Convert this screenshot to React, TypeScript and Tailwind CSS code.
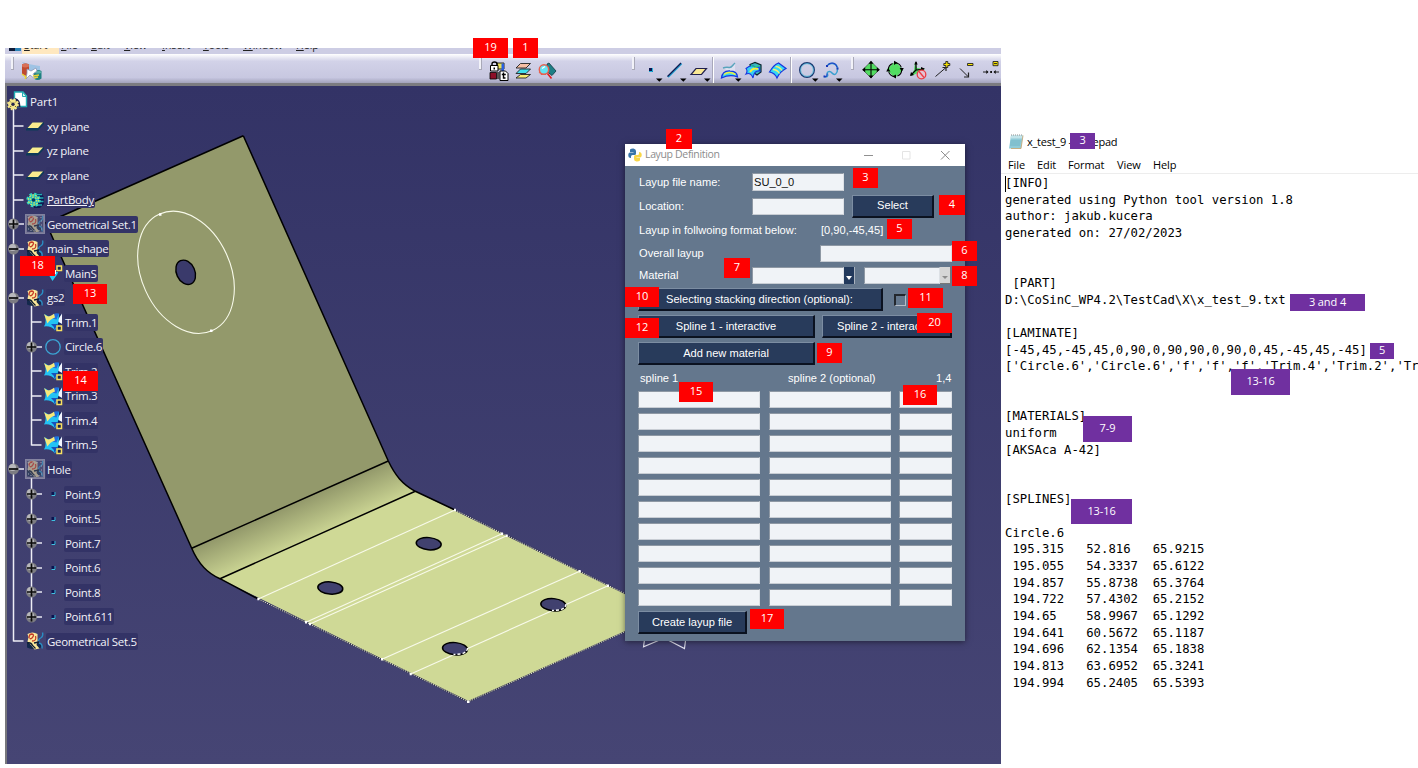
import type { ReactNode } from "react";

/* ---------- toolbar icons, each on a 24px grid ---------- */

function Icon({ children }: { children: ReactNode }) {
  return (
    <svg viewBox="0 0 24 24" className="h-6 w-6 shrink-0 overflow-visible" fill="none">
      {children}
    </svg>
  );
}

const drop = <path d="M17 18.500h6.500l-3.200 3.300z" fill="#000" />;

const catalogIcon = (
  <Icon>
    <path d="M3 2c5 1 8 3 18 4v5H10z" fill="#9fc3e4" />
    <path d="M3 4.500q3.500-2 7 0v11q-4 1-7-1z" fill="#c04a30" />
    <path d="M3 4.500q3.500-2 7 0v2q-4 2-7 0z" fill="#d97058" />
    <path d="M15 11q4-2 7.500 0v7.500q-4 3-7.500 0z" fill="#1f8080" />
    <path d="M16 11.500q3-1.500 6 0v1.500q-3 1-6 0z" fill="#5ab0a8" />
    <path d="M8 9l4 2 5-3 1 3-4 3 2 5-5-4-4 4 1-6z" fill="#fff" stroke="#8b95b8" strokeWidth=".8" />
    <path d="M3 14l4 3-1 2M14 16l6-1M15 18l4-1" stroke="#e8d33a" strokeWidth="1.500" />
  </Icon>
);

const lockIcon = (
  <Icon>
    <path d="M10 3h7v6h-7z" fill="#e8e05c" stroke="#000" strokeWidth=".8" />
    <path d="M14.500 3.500h2.500v9h-2.500z" fill="#2a60e0" />
    <path d="M5 6V4q0-2 2.500-2T10 4v2" stroke="#000" strokeWidth="1.400" />
    <path d="M3.500 5.500h7.500v5.500h-7.500z" fill="#fff" stroke="#000" />
    <path d="M6.500 7.500h1.500v2H6.500z" fill="#000" />
    <path d="M3 12.500h6.500v6.500H3z" fill="#8c0f28" stroke="#000" strokeWidth=".8" />
    <path d="M10 12h2.500v7H10z" fill="#555" />
    <path d="M13 11h5.500l2.500 2.500v7h-8z" fill="#fff" stroke="#000" />
    <path d="M16.500 12.500v5.500h2M14.800 14.500h4" stroke="#000" strokeWidth="1.400" />
  </Icon>
);

const layersIcon = (
  <Icon>
    <path d="M9.500 3.500H19.500l-4.500 4.500H5z" fill="#f6bea4" stroke="#222" strokeWidth=".9" />
    <path d="M9.500 9H19.500l-4.500 4.500H5z" fill="#3fe0ee" stroke="#222" strokeWidth=".9" />
    <path d="M9.500 14.500H19.500l-4.500 3.500H5z" fill="#f8ed72" stroke="#222" strokeWidth=".9" />
  </Icon>
);

const searchIcon = (
  <Icon>
    <path d="M12 4l2-1 7 8-4 4.500-5-4z" fill="#1d7f86" stroke="#0c3840" strokeWidth=".8" />
    <circle cx="9" cy="9.500" r="4.700" fill="#62e4f4" stroke="#e8604e" strokeWidth="1.500" />
    <path d="M7 8.500l3-2" stroke="#fff" strokeWidth="1.300" />
    <path d="M12.500 13.500l4 5" stroke="#e02020" strokeWidth="1.700" />
    <path d="M4 12l2 2.500h5" stroke="#e8604e" />
  </Icon>
);

const pointIcon = (
  <Icon>
    <path d="M10 8h4v4h-4z" fill="#0a1550" />
    <path d="M13.500 8v3.500h-3.500" stroke="#22b4dc" />
    {drop}
  </Icon>
);

const lineIcon = (
  <Icon>
    <path d="M5 17L18.500 3.500" stroke="#22a0d0" strokeWidth="2" />
    <path d="M4.500 16.500L18 3" stroke="#101850" strokeWidth="1.200" />
    {drop}
  </Icon>
);

const planeIcon = (
  <Icon>
    <path d="M9 8.500h10.500l-5 6H4z" fill="#fae994" stroke="#20204c" strokeWidth="1.200" />
    {drop}
  </Icon>
);

const sweepIcon = (
  <Icon>
    <path d="M6 8q3-1 5 0c3 1 3-2 6-4.500V11l-6 2z" fill="#e8ecf8" opacity=".6" />
    <path d="M5 8q3-1 6-.500c3 .500 3-2 6-4.500" stroke="#58a4bc" strokeWidth="1.500" />
    <path d="M3.500 18q1-7.500 8.500-7 7 0 7.500 6-7.500-3-16 1z" fill="#35d8f0" stroke="#1836e0" strokeWidth="1.300" />
    <path d="M6 14.500q5-4 11.500 0" stroke="#f4ee40" strokeWidth="1.500" />
    {drop}
  </Icon>
);

const filletIcon = (
  <Icon>
    <path d="M8 4.500l5-2 6 2.500v7l-4 3-6-4z" fill="#3bb7c0" stroke="#0b2630" strokeWidth="1.200" />
    <path d="M4 8.500q4-3.500 7-2.500 3 1.500 6 1l1 4q-6-1-7 7-2-6-7-4 2-3 0-5.500z" fill="#35d0f4" stroke="#1836e0" strokeWidth="1.100" />
    <path d="M8 12q3-5 8-3" stroke="#f4ee40" strokeWidth="2" />
    <path d="M9 5l3 2 5-1" stroke="#20e070" />
  </Icon>
);

const offsetIcon = (
  <Icon>
    <path d="M3.500 12q4-7 9-9l7.500 5.500q-6 3-9 9.500-2-5-7.500-6z" fill="#35d8f4" stroke="#1836e0" strokeWidth="1.200" />
    <path d="M7 9.500q4 0 6.500 4M9.500 6.500q4 0 6.500 4" stroke="#f4f070" strokeWidth="1.400" />
  </Icon>
);

const circleIcon = (
  <Icon>
    <circle cx="12" cy="10" r="7.300" stroke="#1d3a72" strokeWidth="1.400" />
    <circle cx="12" cy="10" r="6.400" stroke="#3fb2d4" strokeWidth=".8" />
    {drop}
  </Icon>
);

const splineIcon = (
  <Icon>
    <path d="M8.500 5.500c2-3.500 9-2.500 10 2.500M18.500 9c0 5-3 7-5.500 4-2-2.500-5.500-1.500-4.500 1 .800 2-.500 3.500-3 2.500" stroke="#38a0d0" strokeWidth="1.500" />
    <path d="M9 5c2-3 8-2.500 9 2M8 13.500c0 2 0 3.500-2.500 3" stroke="#1e4ac8" strokeWidth="1.200" />
    <path d="M7 5h2v2H7zM4.500 15.500h2v2h-2zM17.500 7.500h2v2h-2z" fill="#1838b8" />
    {drop}
  </Icon>
);

const moveIcon = (
  <Icon>
    <path d="M12 1.500l8.300 8.200-8.300 8.300-8.300-8.300z" fill="#52dc62" stroke="#222" strokeWidth=".5" />
    <path d="M12 2v15.500M4 9.700h16" stroke="#000" strokeWidth="1.100" />
    <path d="M12 .8l2.500 3H9.500zM12 18.600l2.500-3H9.500zM3.200 9.700l3-2.500v5zM20.800 9.700l-3-2.500v5z" fill="#000" />
  </Icon>
);

const rotateIcon = (
  <Icon>
    <path d="M12 1.500l8.300 8.200-8.300 8.300-8.300-8.300z" fill="#52dc62" />
    <circle cx="12" cy="9.700" r="6.700" stroke="#000" strokeWidth="1.100" strokeDasharray="8 2.500" />
    <path d="M11 .8l3.500 2-3.500 2.200zM13 18.600l-3.500-2 3.500-2.200zM3.200 11.500l2-3.500 2.200 3.500zM20.800 8l-2 3.500-2.200-3.500z" fill="#000" />
  </Icon>
);

const hideIcon = (
  <Icon>
    <path d="M8 2l2 6 8 1-7 4-7 3 3-6z" fill="#52dc62" />
    <path d="M9 2v8l8-1M9 10l-5 5" stroke="#000" strokeWidth="1.200" />
    <path d="M9 1l1.700 3.500H7.300zM3 16l1-4 3 3zM18 8.700l-4-1.700v3.500z" fill="#000" />
    <circle cx="14.500" cy="14.500" r="4.300" stroke="#ec3c44" strokeWidth="1.300" fill="#e5c3d2" />
    <path d="M12 11.500l5 6" stroke="#ec3c44" strokeWidth="1.300" />
  </Icon>
);

const addIcon = (
  <Icon>
    <path d="M4.500 16.500L15 7.500" stroke="#222" />
    <path d="M15 7v4M15.500 7.500h-4" stroke="#222" strokeWidth="1.200" />
    <path d="M14.800 1.500h2v2h2v2h-2v2h-2v-2h-2v-2h2z" fill="#fbe600" stroke="#222" strokeWidth=".9" />
  </Icon>
);

const removeIcon = (
  <Icon>
    <path d="M5 8.500l8 8" stroke="#222" />
    <path d="M13.500 12.500v4.500h-4.500" stroke="#222" strokeWidth="1.200" />
    <path d="M12.500 3.500h5.500v2h-5.500z" fill="#fbe600" stroke="#222" strokeWidth=".9" />
  </Icon>
);

const fitIcon = (
  <Icon>
    <path d="M4 12h5M20 12h-5" stroke="#222" />
    <path d="M9.500 12L7.300 9.900v4.200zM14.500 12L16.700 9.900v4.200zM11.200 11h1.800v2h-1.800z" fill="#111" />
    <path d="M14 1.500h5v4.200h-5z" fill="#fbe600" stroke="#222" strokeWidth=".9" />
    <path d="M15 3.600h3" stroke="#222" />
  </Icon>
);

function Grip() {
  return <div className="h-[13px] w-[3px] shrink-0 border-r border-b border-[#a9a9b8] bg-[#f2f2f8]" />;
}

function Divider() {
  return <div className="h-[26px] w-0.5 shrink-0 border-r border-white bg-[#a8a8ba]" />;
}

function Toolbar() {
  return (
    <div className="relative flex h-[29px] shrink-0 items-start bg-linear-to-b from-white via-[#d2d2e8] via-25% to-[#c4c4de] pt-[3px]">
      <div className="absolute inset-x-0 bottom-0 h-[5px] bg-linear-to-b from-[#c4c4de] to-[#a2a2ba]" />
      <div className="relative flex">
        <div className="ml-1.5"><Grip /></div>
        <div className="mt-[3px] ml-[5px]">{catalogIcon}</div>
        <div className="ml-[436px]"><Grip /></div>
        <div className="mt-[3px] ml-[5px] flex">{lockIcon}{layersIcon}{searchIcon}</div>
        <div className="ml-[73px]"><Grip /></div>
        <div className="mt-[3px] ml-1 flex">{pointIcon}{lineIcon}{planeIcon}</div>
        <div className="ml-px"><Divider /></div>
        <div className="mt-[3px] ml-[4px] flex">{sweepIcon}{filletIcon}{offsetIcon}</div>
        <div><Divider /></div>
        <div className="mt-[3px] ml-[3px] flex">{circleIcon}{splineIcon}</div>
        <div className="ml-2"><Grip /></div>
        <div className="mt-[3px] ml-[5px] flex">
          {moveIcon}{rotateIcon}{hideIcon}{addIcon}{removeIcon}{fitIcon}
        </div>
      </div>
    </div>
  );
}

const menus = [
  { name: "Start", box: "w-[37px] bg-[#ffe8bf] pl-0.5" },
  { name: "File", box: "w-[30px] pl-0.5" },
  { name: "Edit", box: "w-[33px] pl-0.5" },
  { name: "View", box: "w-[38px] pl-0.5" },
  { name: "Insert", box: "w-[41px] pl-0.5" },
  { name: "Tools", box: "w-[40px] pl-0.5" },
  { name: "Window", box: "w-[53px] pl-0.5" },
  { name: "Help", box: "w-[40px] pl-0.5" },
];

function MenuStrip() {
  return (
    <div className="flex h-[6px] shrink-0 items-end overflow-hidden bg-[#cdcde4] pl-1">
      <div className="flex h-[6px] w-[13px] items-start">
        <div className="h-[3px] w-1.5 bg-[#101c38]" />
        <div className="h-[3px] w-1.5 bg-[#2c84b8]" />
      </div>
      {menus.map((m) => (
        <div key={m.name} className={`flex h-5 items-end font-['Open_Sans',sans-serif] text-[10.500px] leading-[18px] text-[#222] ${m.box}`}>
          <span>
            <span className="underline">{m.name[0]}</span>
            {m.name.slice(1)}
          </span>
        </div>
      ))}
    </div>
  );
}

/* ---------- part drawing ---------- */

const holes = [
  [428.700, 543.700],
  [330.300, 588],
  [553.300, 604.700],
  [455, 648.700],
];

const traces = [
  [258.300, 599, 455, 510],
  [306, 622.300, 502, 533.700],
  [310, 624, 506.700, 535.700],
  [382, 659.300, 579.700, 571.300],
  [410.700, 674, 608, 585.700],
];

function Model() {
  return (
    <svg viewBox="7 86 994 678" className="absolute inset-0 h-full w-full" fill="none">
      <defs>
        <linearGradient id="bend" gradientUnits="userSpaceOnUse" x1="289" y1="506" x2="306" y2="544">
          <stop offset="0" stopColor="#93996b" />
          <stop offset="1" stopColor="#cfd996" />
        </linearGradient>
      </defs>
      <path d="M243.300 135.700L388.300 461 191.700 548.300 46 223z" fill="#93996b" />
      <path d="M388.300 461C395 475 402 484 415.300 491.300L220 578.700C206 573 198 563 191.700 548.300z" fill="url(#bend)" />
      <path d="M415.300 491.300L640 601v24L468.300 701.700 220 578.700z" fill="#cfd996" />
      <g stroke="#000" strokeWidth="1.500">
        <path d="M243.300 135.700L388.300 461C395 475 402 484 415.300 491.300L455 510" />
        <path d="M243.300 135.700L46 223 191.700 548.300C198 563 206 573 220 578.700L258.300 599" />
        <path d="M191.700 548.300L388.300 461M220 578.700L415.300 491.300" />
      </g>
      <path d="M258.300 599L468.300 701.700 640 625M455 510L640 601" stroke="#33334a" strokeWidth="1.300" />
      <path d="M258.300 599L468.300 701.700 640 625M455 510L640 601" stroke="#f4f6e4" strokeWidth=".9" strokeDasharray="1.200 1.200" />
      <g stroke="#f8faea" strokeWidth="1.100">
        {traces.map(([x1, y1, x2, y2]) => (
          <g key={x1}>
            <path d={`M${x1} ${y1}L${x2} ${y2}`} />
            <path d={`M${x1 - 1} ${y1}h2M${x2 - 1} ${y2}h2`} stroke="#fff" strokeWidth="2.500" />
          </g>
        ))}
        <ellipse cx="186" cy="272.300" rx="63.900" ry="44.400" transform="rotate(65.600 186 272.300)" />
      </g>
      <ellipse cx="185.700" cy="272.300" rx="12.700" ry="9.200" transform="rotate(65.600 185.700 272.300)" fill="#3a3a6b" stroke="#000" strokeWidth="1.400" />
      {holes.map(([x, y]) => (
        <ellipse key={x} cx={x} cy={y} rx="12.500" ry="6.100" transform={`rotate(5 ${x} ${y})`} fill="#41416f" stroke="#000" strokeWidth="1.500" />
      ))}
      <path d="M566 604q0 4-6 6l-8 .5M467.500 648q0 4-6 6l-8 .5" stroke="#fff" strokeWidth="1.400" strokeDasharray="3 2" />
      <path d="M159 214.500h2.500M210 330.700h2.500M467 701.700h2.500" stroke="#fff" strokeWidth="2.500" />
      <path d="M645 636l-1.500 10.800L662 639M666 639l18.500 9.600 1.500-12" stroke="#e4e4f0" strokeWidth="1.100" />
    </svg>
  );
}

/* ---------- specification tree ---------- */

function PartGlyph() {
  return (
    <svg viewBox="0 0 22 22" className="h-[22px] w-[22px]" fill="none">
      <path d="M7.500 1h8.500l3.500 4v10.500h-12z" fill="#fff" stroke="#23aeb4" strokeWidth="1.400" />
      <path d="M15.500 1v4.500h4z" fill="#d8f4f4" stroke="#23aeb4" />
      <path d="M8 7q5.500 1 5.500 9H8z" fill="#1b1b48" />
      <circle cx="6" cy="13.300" r="4.800" fill="#f4e58a" stroke="#f4e58a" strokeWidth="2.200" strokeDasharray="1.900 1.870" />
      <circle cx="6" cy="13.300" r="4.200" fill="#f4e58a" />
      <circle cx="6" cy="13.300" r="1.700" fill="#26264c" />
      <path d="M3.200 10.500l1 1M9 10.500l-1 1M3.200 16l1-1M9 16l-1-1" stroke="#6a6030" />
    </svg>
  );
}

function PlaneGlyph() {
  return (
    <svg viewBox="0 0 18 18" className="h-[18px] w-[18px]">
      <path d="M6.500 5.500h11.500v1.500l-6 6.500H0v-1.500z" fill="#0d3a58" />
      <path d="M6.500 5.500h10.500l-5 5.500H1.500z" fill="#faec8e" />
    </svg>
  );
}

function BodyGlyph() {
  return (
    <svg viewBox="0 0 18 18" className="h-[18px] w-[18px]" fill="none">
      <path d="M9 2h6l3 4v7l-4 4H8z" fill="#0c1c54" />
      <path d="M11 3.500h5M13 7h4.500M13 10.500h4.500M11 14h5" stroke="#27a8b0" strokeWidth="1.700" />
      <circle cx="7.500" cy="9" r="5.800" fill="#22b8c4" stroke="#34d8c0" strokeWidth="2.800" strokeDasharray="2.400 2.150" />
      <circle cx="7.500" cy="9" r="5" stroke="#cfe85a" strokeWidth="1.300" strokeDasharray="1.600 1.500" />
      <circle cx="7.500" cy="9" r="3" stroke="#cfe85a" strokeWidth="1.300" strokeDasharray="1.600 1.500" />
      <circle cx="7.500" cy="9" r="1.800" fill="#0c3a60" />
    </svg>
  );
}

function SetGlyph({ hidden }: { hidden?: boolean }) {
  return (
    <svg viewBox="0 0 20 20" className="h-5 w-5" fill="none">
      <path d="M2 12.500q5-2.500 14 0v4q-7 3-14 0z" fill="#13284c" />
      <path d="M2.500 3q5-3 10 0v7l-1 4 3 3.500-5 1-3-4-4-4 1-4z" fill={hidden ? "#c9bc96" : "#fbe89a"} />
      <path d="M4 7q0-4 3-4 3 .5 0 4-2 1.500-2 0M7 10q5 0 3.500-5" stroke="#c43c28" strokeWidth="1.300" />
      <path d="M17.500 1.500q1 3-1 5-3 1-3 4M14 12q4 1 3 5.500" stroke="#2a8ec4" strokeWidth="1.300" />
      <path d="M2 12q4-1 5.500 2.500l3 3M9 12l5-1" stroke="#0d1c30" strokeWidth="1.300" />
      {hidden && (
        <>
          <path d="M.5.5h19v19H.5z" fill="#6c6c88" opacity=".35" />
          <path d="M.5.5h19v19H.5z" stroke="#c4c4d0" strokeDasharray="1 1" />
          <path d="M1.500 1.500h17v17h-17z" stroke="#a4a4b8" strokeDasharray="1 1" />
          <path d="M3.500 3.500h13v13h-13z" stroke="#a4a4b8" strokeDasharray="1 3" />
        </>
      )}
    </svg>
  );
}

function TrimGlyph() {
  return (
    <svg viewBox="0 0 20 20" className="h-5 w-5" fill="none">
      <path d="M12 4l7-2v10l-5 1z" fill="#0d2460" />
      <path d="M19 1.500V12l-5-3z" fill="#f4f6ff" />
      <path d="M1.500 2l4 2.500L16 2l-.500 8-3.500 8.500Q8 13.500 1 14.500 4 10 1.500 2z" fill="#23c3f4" />
      <path d="M10 2.500q3-2 6-1l-2.500 6-4-1z" fill="#2070e0" />
      <path d="M1 2q3 2.500 5 2.500 3-1 5-2.800L12 5.500Q7 7 4.500 11.500z" fill="#f8e878" />
      <path d="M8 12q3 2 3.500 6l3-6z" fill="#1a50b8" />
      <path d="M14 14h4.500v4.500H14z" fill="#18204c" stroke="#f8e060" strokeWidth="1.500" />
    </svg>
  );
}

function MainGlyph() {
  return (
    <svg viewBox="0 0 20 20" className="h-5 w-5" fill="none">
      <path d="M4 9h11l-.500 2-5 7z" fill="#25c8f4" />
      <path d="M7 7h6v4H7z" fill="#fff" />
      <path d="M14 3h4.500v4.500H14z" fill="#18204c" stroke="#f8e060" strokeWidth="1.500" />
    </svg>
  );
}

function RingGlyph() {
  return (
    <svg viewBox="0 0 20 20" className="h-5 w-5" fill="none">
      <circle cx="10" cy="9.900" r="7.200" stroke="#3ba4d4" strokeWidth="1.300" />
    </svg>
  );
}

function DotGlyph() {
  return (
    <svg viewBox="0 0 20 20" className="h-5 w-5" fill="none">
      <path d="M8.500 8h4v4h-4z" fill="#0c1450" />
      <path d="M12 8v3.500H8.500" stroke="#40c0e0" />
    </svg>
  );
}

function Knob({ plus }: { plus: boolean }) {
  return (
    <svg viewBox="0 0 17 12" className="h-3 w-[17px] shrink-0" fill="none">
      <path d="M6.500 6h10.500" stroke="#e8e8f2" strokeWidth="1.500" />
      <circle cx="6.500" cy="6" r="5.500" fill="#7c7c82" />
      <circle cx="5.500" cy="4.500" r="3.500" fill="#b8b8bc" />
      <path d={plus ? "M2 6h9M6.500 1.500v9" : "M2 6h9"} stroke="#0a0a0a" strokeWidth="1.700" />
    </svg>
  );
}

function Tick() {
  return (
    <svg viewBox="0 0 17 12" className="h-3 w-[17px] shrink-0">
      <path d="M6.500 6h10" stroke="#eeeef6" strokeWidth="1.500" />
    </svg>
  );
}

type Row = { text: string; icon: ReactNode; sub?: boolean; knob?: "plus" | "minus"; underline?: boolean };

const treeRows: Row[] = [
  { text: "xy plane", icon: <PlaneGlyph /> },
  { text: "yz plane", icon: <PlaneGlyph /> },
  { text: "zx plane", icon: <PlaneGlyph /> },
  { text: "PartBody", icon: <BodyGlyph />, underline: true },
  { text: "Geometrical Set.1", icon: <SetGlyph hidden />, knob: "plus" },
  { text: "main_shape", icon: <SetGlyph />, knob: "minus" },
  { text: "MainS", icon: <MainGlyph />, sub: true },
  { text: "gs2", icon: <SetGlyph />, knob: "minus" },
  { text: "Trim.1", icon: <TrimGlyph />, sub: true },
  { text: "Circle.6", icon: <RingGlyph />, sub: true, knob: "plus" },
  { text: "Trim.2", icon: <TrimGlyph />, sub: true },
  { text: "Trim.3", icon: <TrimGlyph />, sub: true },
  { text: "Trim.4", icon: <TrimGlyph />, sub: true },
  { text: "Trim.5", icon: <TrimGlyph />, sub: true },
  { text: "Hole", icon: <SetGlyph hidden />, knob: "minus" },
  { text: "Point.9", icon: <DotGlyph />, sub: true, knob: "plus" },
  { text: "Point.5", icon: <DotGlyph />, sub: true, knob: "plus" },
  { text: "Point.7", icon: <DotGlyph />, sub: true, knob: "plus" },
  { text: "Point.6", icon: <DotGlyph />, sub: true, knob: "plus" },
  { text: "Point.8", icon: <DotGlyph />, sub: true, knob: "plus" },
  { text: "Point.611", icon: <DotGlyph />, sub: true, knob: "plus" },
  { text: "Geometrical Set.5", icon: <SetGlyph /> },
];

function Tree() {
  return (
    <div className="relative flex flex-col pt-[3.500px] font-['Open_Sans',sans-serif] text-[11.500px] tracking-[-0.300px] text-[#f2f2f8]">
      <svg viewBox="7 86 60 580" className="absolute top-0 left-0 h-[580px] w-[60px]" fill="none">
        <path d="M13.500 108v533.500M31.500 304v141.500M31.500 478v139" stroke="#eeeef6" strokeWidth="1.500" />
      </svg>
      <div className="relative flex h-[24.520px] items-center">
        <PartGlyph />
        <span className="ml-px tracking-[-0.100px]">Part1</span>
      </div>
      {treeRows.map((r) => (
        <div key={r.text} className={`relative flex h-[24.520px] items-center ${r.sub ? "pl-[18px]" : ""}`}>
          {r.knob ? <Knob plus={r.knob === "plus"} /> : <Tick />}
          <span className="flex w-[21px] shrink-0 justify-center">{r.icon}</span>
          <span className={`ml-px h-[17px] rounded-xs bg-[#333366] px-px leading-[17px] whitespace-pre ${r.underline ? "underline" : ""}`}>{r.text}</span>
        </div>
      ))}
    </div>
  );
}

/* ---------- dialog ---------- */

function Field({ className }: { className: string }) {
  return <div className={`h-[17px] shrink-0 border border-t-[#8e98a4] border-r-[#dde1e6] border-b-[#c8cdd4] border-l-[#8e98a4] bg-[#f0f3f7] ${className}`} />;
}

function Button({ className, children }: { className: string; children: ReactNode }) {
  return (
    <div className={`flex h-[23px] shrink-0 items-center border border-r-2 border-b-2 border-t-[#7c8da2] border-r-[#0b1220] border-b-[#0b1220] border-l-[#7c8da2] bg-[#283b5b] whitespace-nowrap ${className}`}>
      {children}
    </div>
  );
}

function Dialog() {
  return (
    <div className="absolute top-[58px] left-[618px] w-[340px] bg-[#64778d] font-['Liberation_Sans',Arial,sans-serif] text-[11.100px] text-white shadow-[0_1px_6px_rgba(0,0,0,0.5)]">
      <div className="flex h-[22px] items-center bg-white pl-[3px] font-['Open_Sans',sans-serif] text-[10.500px] tracking-[-0.350px] text-[#8c8c8c]">
        <svg viewBox="0 0 14 14" className="mr-[3px] h-[14px] w-[14px]">
          <path d="M2 1.500Q3.500.3 5.500.5 8 1 8 3v2.500Q8 7 6.500 7H4.500Q3 7 3 8.500V10Q0 10 .3 6.500.500 4.500 2 4.500h3.500V4H2z" fill="#3874a8" />
          <path d="M12 12.500q-1.500 1.200-3.500 1Q6 13 6 11V8.500Q6 7 7.500 7h2Q11 7 11 5.500V4q3 0 2.700 3.500-.2 2-1.700 2H8.500v.5H12z" fill="#f8d648" />
        </svg>
        <span className="grow">Layup Definition</span>
        <svg viewBox="0 0 90 12" className="mr-[12px] h-3 w-[90px] shrink-0" fill="none">
          <path d="M1 6.500h9" stroke="#909090" />
          <path d="M39.500 2.500h7.500v7.500h-7.500z" stroke="#e4e4e4" />
          <path d="M78 2l8.500 8.500M86.500 2L78 10.500" stroke="#8a8a8a" />
        </svg>
      </div>
      <div className="flex flex-col px-[13px] pt-1 pb-1">
        <div className="flex h-6 items-center">
          <span className="w-[114px] pl-px">Layup file name:</span>
          <div className="flex h-[18px] w-[92px] items-center border border-t-[#8e98a4] border-r-[#dde1e6] border-b-[#c8cdd4] border-l-[#8e98a4] bg-[#f0f3f7] pl-px text-[#111]">SU_0_0</div>
        </div>
        <div className="flex h-6 items-center">
          <span className="w-[114px] pl-px">Location:</span>
          <Field className="w-[92px]" />
          <Button className="ml-2 w-[82px] justify-center">Select</Button>
        </div>
        <div className="flex h-6 items-center">
          <span className="w-[183px] pl-px">Layup in follwoing format below:</span>
          <span>[0,90,-45,45]</span>
        </div>
        <div className="flex h-[22px] items-center">
          <span className="w-[182px] pl-px">Overall layup</span>
          <Field className="w-[132px]" />
        </div>
        <div className="flex h-[22px] items-center">
          <span className="w-[114px] pl-px">Material</span>
          <Field className="w-[92px]" />
          <div className="flex h-[17px] w-[11px] items-end justify-center border-r border-[#a9b2bd] bg-[#22395c] pb-1">
            <div className="border-x-[3px] border-t-4 border-x-transparent border-t-white" />
          </div>
          <Field className="ml-[9px] w-[76px]" />
          <div className="flex h-[17px] w-[11px] items-end justify-center border-r border-b border-[#777] bg-[#d6d6d6] pb-1">
            <div className="border-x-[3px] border-t-[3px] border-x-transparent border-t-[#8c8c8c]" />
          </div>
        </div>
        <div className="flex h-[27px] items-center">
          <Button className="w-[245px] pl-[27px]">Selecting stacking direction (optional):</Button>
          <div className="ml-[11px] h-3 w-3 border-t-2 border-r border-b border-l-2 border-t-[#23272d] border-r-[#b4bcc6] border-b-[#b4bcc6] border-l-[#23272d]" />
        </div>
        <div className="flex h-[27px] items-center">
          <Button className="w-[177px] justify-center">Spline 1 - interactive</Button>
          <Button className="ml-[7px] w-[130px] pl-[14px]">Spline 2 - interactive</Button>
        </div>
        <div className="flex h-[27px] items-center">
          <Button className="w-[177px] justify-center">Add new material</Button>
        </div>
        <div className="flex h-[21px] items-center pt-0.5">
          <span className="w-[149px] pl-0.5">spline 1</span>
          <span className="w-[149px] pl-px">spline 2 (optional)</span>
          <span>1,4</span>
        </div>
        {Array.from({ length: 10 }, (_, i) => (
          <div key={i} className="flex h-[22px] items-center">
            <Field className="w-[122px]" />
            <Field className="ml-[9px] w-[122px]" />
            <Field className="ml-2 w-[53px]" />
          </div>
        ))}
        <div className="flex h-[29px] items-center">
          <Button className="w-[109px] justify-center">Create layup file</Button>
        </div>
      </div>
    </div>
  );
}

/* ---------- notepad ---------- */

const noteText = `[INFO]
generated using Python tool version 1.8
author: jakub.kucera
generated on: 27/02/2023


 [PART]
D:\\CoSinC_WP4.2\\TestCad\\X\\x_test_9.txt

[LAMINATE]
[-45,45,-45,45,0,90,0,90,90,0,90,0,45,-45,45,-45]
['Circle.6','Circle.6','f','f','f','Trim.4','Trim.2','Trim.5'


[MATERIALS]
uniform
[AKSAca A-42]


[SPLINES]

Circle.6
 195.315   52.816   65.9215
 195.055   54.3337  65.6122
 194.857   55.8738  65.3764
 194.722   57.4302  65.2152
 194.65    58.9967  65.1292
 194.641   60.5672  65.1187
 194.696   62.1354  65.1838
 194.813   63.6952  65.3241
 194.994   65.2405  65.5393`;

function Notepad() {
  return (
    <div className="flex min-w-0 grow flex-col overflow-hidden pt-[131px] font-['Open_Sans',sans-serif] text-[11px] text-black">
      <div className="flex h-[22px] shrink-0 items-center pl-[7px] tracking-[-0.250px]">
        <svg viewBox="0 0 16 16" className="mr-[3px] h-4 w-4" fill="none">
          <path d="M3 1.500h12l-2 13H1z" fill="#8fcbd8" />
          <path d="M3 1.500h12l-.5 3h-12z" fill="#c3e4ea" />
          <path d="M2.500 7h10M2.200 9h10M2 11h10" stroke="#69aebf" strokeWidth=".7" />
          <path d="M3 1h11" stroke="#909090" strokeDasharray="1 1" />
          <path d="M15 1.500l-2 13H3" stroke="#c5a878" strokeWidth=".9" />
        </svg>
        <span>x_test_9 - Notepad</span>
      </div>
      <div className="flex h-[21px] shrink-0 items-center border-b border-[#ededed] pt-[4px] pl-[7px] tracking-[-0.100px]">
        <span className="w-[29px]">File</span>
        <span className="w-[31px]">Edit</span>
        <span className="w-[49px]">Format</span>
        <span className="w-[36px]">View</span>
        <span>Help</span>
      </div>
      <div className="relative pt-px">
        <div className="absolute top-0.5 left-1 h-4 w-px bg-black" />
        <pre className="pl-1 font-['DejaVu_Sans_Mono',monospace] text-[12.270px] leading-[16.650px]">{noteText}</pre>
      </div>
    </div>
  );
}

/* ---------- callout badges ---------- */

const redBadges = [
  { n: "19", at: "left-[473px] top-[38px] w-[35px]" },
  { n: "1", at: "left-[513px] top-[38px] w-[25px]" },
  { n: "2", at: "left-[666px] top-[129px] w-[26px]" },
  { n: "3", at: "left-[853px] top-[168px] w-[25px]" },
  { n: "4", at: "left-[939px] top-[195px] w-[26px]" },
  { n: "5", at: "left-[887px] top-[219px] w-[25px]" },
  { n: "6", at: "left-[952px] top-[241px] w-[25px]" },
  { n: "7", at: "left-[724px] top-[258px] w-[26px]" },
  { n: "8", at: "left-[952px] top-[266px] w-[25px]" },
  { n: "10", at: "left-[625px] top-[287px] w-[34px]" },
  { n: "11", at: "left-[908px] top-[288px] w-[35px]" },
  { n: "12", at: "left-[625px] top-[318px] w-[34px]" },
  { n: "20", at: "left-[917px] top-[313px] w-[35px]" },
  { n: "9", at: "left-[817px] top-[343px] w-[25px]" },
  { n: "15", at: "left-[679px] top-[382px] w-[34px]" },
  { n: "16", at: "left-[903px] top-[385px] w-[34px]" },
  { n: "17", at: "left-[750px] top-[609px] w-[34px]" },
  { n: "18", at: "left-[20px] top-[256px] w-[35px]" },
  { n: "13", at: "left-[73px] top-[284px] w-[34px]" },
  { n: "14", at: "left-[63px] top-[371px] w-[35px]" },
];

const purpleBadges = [
  { n: "3", at: "left-[1070px] top-[133px] w-[25px] h-4" },
  { n: "3 and 4", at: "left-[1290px] top-[294px] w-[75px] h-[17px]" },
  { n: "5", at: "left-[1370px] top-[343px] w-6 h-4" },
  { n: "13-16", at: "left-[1231px] top-[369px] w-[59px] h-[26px]" },
  { n: "7-9", at: "left-[1083px] top-[416px] w-[49px] h-[26px]" },
  { n: "13-16", at: "left-[1071px] top-[499px] w-[61px] h-[25px]" },
];

export default function App() {
  return (
    <div className="relative flex h-[768px] w-[1418px] overflow-hidden bg-white">
      <div className="mt-12 ml-[5px] flex h-[716px] w-[996px] shrink-0 flex-col">
        <MenuStrip />
        <Toolbar />
        <div className="h-[3px] shrink-0 bg-[#7b7b80]" />
        <div className="flex grow border-l-2 border-[#77777c]">
          <div className="relative grow bg-linear-to-b from-[#333366] to-[#464574]">
            <Model />
            <Tree />
            <Dialog />
          </div>
        </div>
      </div>
      <Notepad />
      {redBadges.map((b) => (
        <div key={b.n} className={`absolute flex h-5 items-center justify-center bg-[#ff0000] pb-0.5 font-['Open_Sans',sans-serif] text-[11px] font-medium text-white ${b.at}`}>
          {b.n}
        </div>
      ))}
      {purpleBadges.map((b) => (
        <div key={b.at} className={`absolute flex items-center justify-center bg-[#7030a0] pb-px font-['Open_Sans',sans-serif] text-[11px] font-medium tracking-[-0.100px] text-white ${b.at}`}>
          {b.n}
        </div>
      ))}
    </div>
  );
}
